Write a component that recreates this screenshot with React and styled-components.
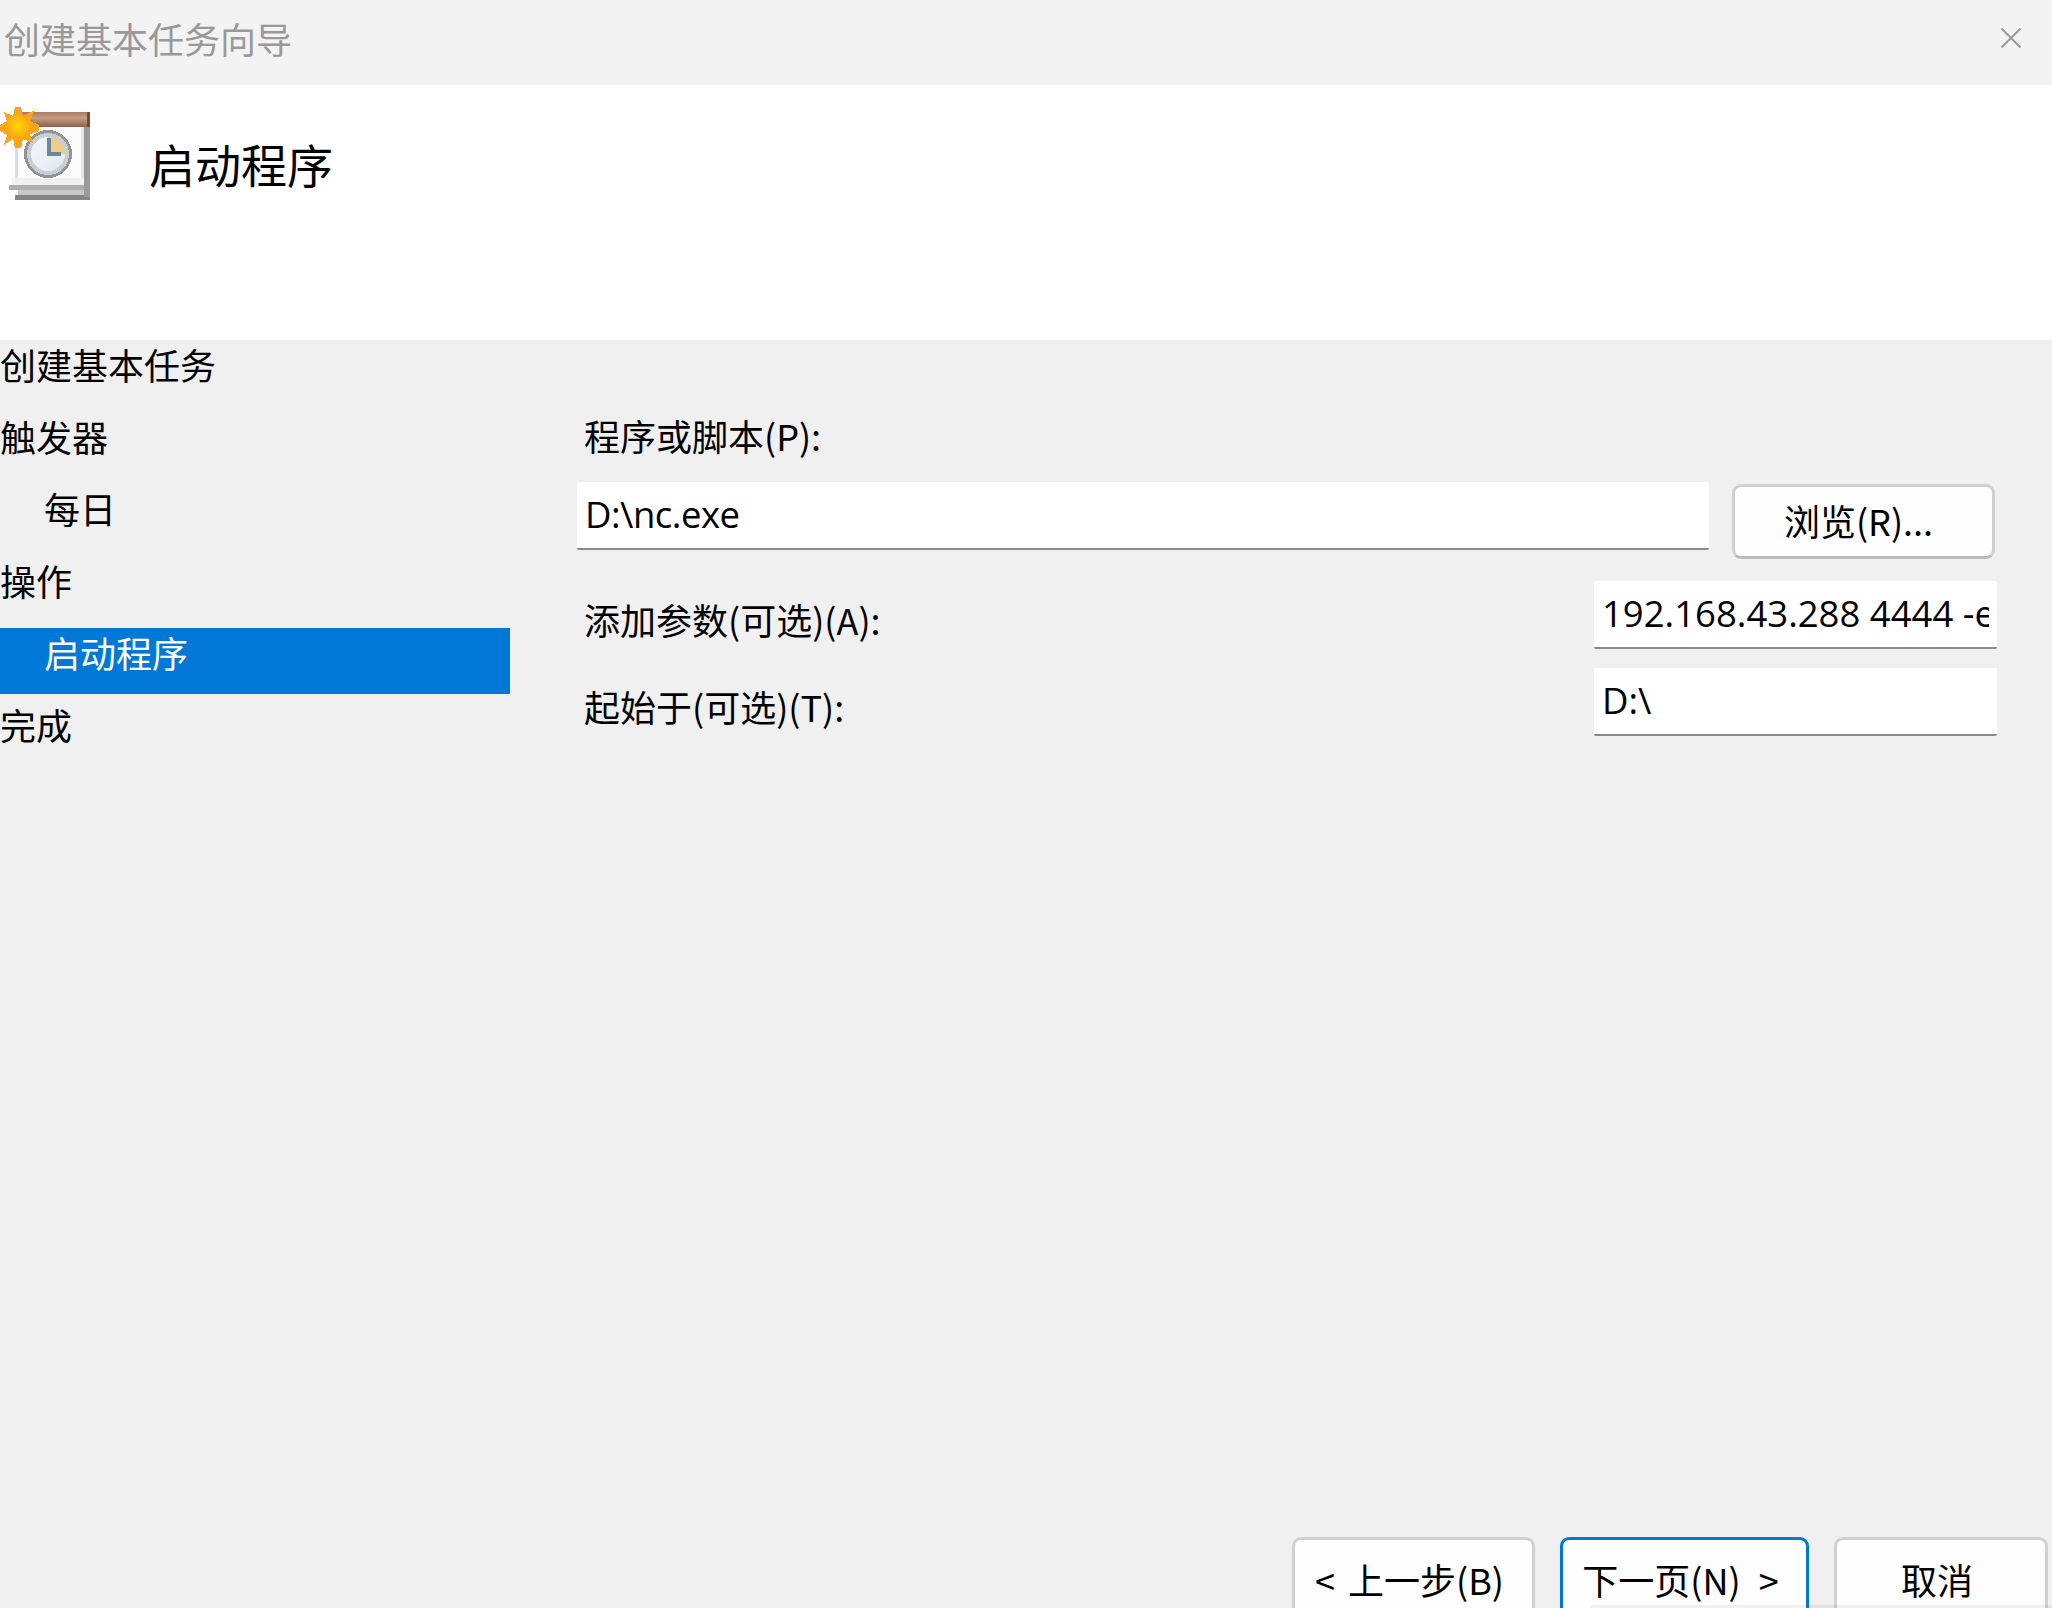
import styled, { createGlobalStyle } from "styled-components";

const GlobalStyle = createGlobalStyle`
  html, body {
    margin: 0;
    padding: 0;
    background: #f0f0f0;
  }
  body {
    font-family: "Noto Sans CJK SC", "Noto Sans", sans-serif;
    color: #000;
  }
`;

const navItems = [
  { label: "创建基本任务" },
  { label: "触发器" },
  { label: "每日", child: true },
  { label: "操作" },
  { label: "启动程序", child: true, active: true },
  { label: "完成" },
];

function TaskIcon() {
  return (
    <svg width="92" height="100" viewBox="0 0 92 100" shapeRendering="crispEdges">
      <defs>
        <linearGradient id="bar" x1="0" y1="0" x2="0" y2="1">
          <stop offset="0" stopColor="#a97c62" />
          <stop offset="0.4" stopColor="#c59c84" />
          <stop offset="1" stopColor="#8f5f48" />
        </linearGradient>
        <radialGradient id="sun" cx="0.55" cy="0.45" r="0.55">
          <stop offset="0" stopColor="#ffd800" />
          <stop offset="0.6" stopColor="#fdb90e" />
          <stop offset="1" stopColor="#fba512" />
        </radialGradient>
        <linearGradient id="face" x1="0" y1="0" x2="1" y2="1">
          <stop offset="0" stopColor="#f4f7fb" />
          <stop offset="1" stopColor="#dfe8f2" />
        </linearGradient>
      </defs>
      <rect x="15" y="95" width="75" height="5" fill="#858585" />
      <rect x="84" y="27" width="6" height="70" fill="#9a9a9a" />
      <rect x="18" y="90" width="66" height="5" fill="#c8c8c8" />
      <rect x="15" y="27" width="69" height="58" fill="#fcfcfc" />
      <rect x="15" y="27" width="3" height="52" fill="#dcdcdc" />
      <rect x="81" y="27" width="3" height="54" fill="#e6e6e6" />
      <rect x="12" y="78" width="72" height="7" fill="#f0f0f0" />
      <rect x="9" y="85" width="75" height="5" fill="#aeaeae" />
      <rect x="21" y="12" width="69" height="15" fill="url(#bar)" />
      <rect x="87" y="12" width="3" height="15" fill="#764a36" />
      <circle cx="48" cy="54" r="24" fill="#949494" />
      <circle cx="48" cy="54" r="21" fill="#c9ced3" />
      <circle cx="48" cy="54" r="17" fill="url(#face)" />
      <path d="M48 37 A17 17 0 0 1 65 54 L48 54 Z" fill="#ebcd87" />
      <rect x="47" y="38" width="4" height="18" fill="#6b8799" />
      <rect x="47" y="52" width="14" height="4" fill="#6b8799" />
      <polygon
        points="15,7 21,7 23,16 35,10 30,21 39,25 39,31 30,34 33,43 23,39 21,48 15,48 13,39 4,45 7,35 0,31 0,25 7,21 4,12 13,16"
        fill="#fba51a"
      />
      <circle cx="17" cy="27" r="12" fill="url(#sun)" />
    </svg>
  );
}

export default function App() {
  return (
    <>
      <GlobalStyle />
      <Window>
        <TitleBar>
          <WindowTitle>创建基本任务向导</WindowTitle>
          <CloseGlyph width="20" height="20" viewBox="0 0 20 20">
            <path d="M0.5 0.5 L19.5 19.5 M19.5 0.5 L0.5 19.5" stroke="#999" strokeWidth="2" fill="none" />
          </CloseGlyph>
        </TitleBar>
        <Header>
          <TaskIcon />
          <Heading>启动程序</Heading>
        </Header>
        <Main>
          <Nav>
            {navItems.map((item) => (
              <NavRow key={item.label} $child={item.child} $active={item.active}>
                {item.label}
              </NavRow>
            ))}
          </Nav>
          <Content>
            <FieldLabel>程序或脚本(P):</FieldLabel>
            <ProgramRow>
              <TextInput $width="1132px">
                <InputValue $tight>D:\nc.exe</InputValue>
              </TextInput>
              <BrowseButton>浏览(R)...</BrowseButton>
            </ProgramRow>
            <FieldRow>
              <FieldLabel $offset="12px">添加参数(可选)(A):</FieldLabel>
              <TextInput $width="403px">
                <InputValue>192.168.43.288 4444 -e</InputValue>
              </TextInput>
            </FieldRow>
            <FieldRow>
              <FieldLabel $offset="12px">起始于(可选)(T):</FieldLabel>
              <TextInput $width="403px">
                <InputValue>D:\</InputValue>
              </TextInput>
            </FieldRow>
          </Content>
        </Main>
        <Footer>
          <WizardButton $width="243px">
            <Chevron $side="left">&lt;</Chevron>上一步(B)
          </WizardButton>
          <WizardButton $width="249px" $primary>
            下一页(N)<Chevron $side="right">&gt;</Chevron>
          </WizardButton>
          <WizardButton $width="214px">取消</WizardButton>
          <FooterShadow />
        </Footer>
      </Window>
    </>
  );
}

const Window = styled.div`
  width: 2052px;
  height: 1608px;
  display: flex;
  flex-direction: column;
  overflow: hidden;
  background: #f0f0f0;
`;

const TitleBar = styled.div`
  height: 85px;
  flex: none;
  display: flex;
  align-items: center;
  justify-content: space-between;
  padding: 0 31px 10px 4px;
  box-sizing: border-box;
  background: #f3f3f3;
`;

const WindowTitle = styled.div`
  font-size: 36px;
  line-height: 52px;
  color: #999;
`;

const CloseGlyph = styled.svg`
  display: block;
`;

const Header = styled.div`
  height: 255px;
  flex: none;
  display: flex;
  align-items: flex-start;
  padding-top: 15px;
  box-sizing: border-box;
  background: #fff;
`;

const Heading = styled.h1`
  margin: 31px 0 0 57px;
  font-size: 46px;
  font-weight: 400;
  line-height: 64px;
`;

const Main = styled.div`
  flex: 1;
  min-height: 0;
  display: flex;
`;

const Nav = styled.nav`
  width: 510px;
  flex: none;
  display: flex;
  flex-direction: column;
  gap: 6px;
`;

const NavRow = styled.div`
  height: 66px;
  box-sizing: border-box;
  padding-left: ${(p) => (p.$child ? "44px" : "0")};
  font-size: 36px;
  line-height: 48px;
  color: ${(p) => (p.$active ? "#fff" : "#000")};
  background: ${(p) => (p.$active ? "#0078d7" : "transparent")};
`;

const Content = styled.div`
  flex: 1;
  min-width: 0;
  padding: 69px 55px 0 67px;
`;

const FieldLabel = styled.div`
  padding-left: 7px;
  margin-top: ${(p) => p.$offset || 0};
  font-size: 36px;
  line-height: 52px;
`;

const ProgramRow = styled.div`
  display: flex;
  align-items: flex-start;
  gap: 23px;
  margin-top: 21px;
`;

const FieldRow = styled.div`
  display: flex;
  justify-content: space-between;
  align-items: flex-start;
  margin-top: 19px;

  ${ProgramRow} + & {
    margin-top: 22px;
  }
`;

const TextInput = styled.div`
  width: ${(p) => p.$width};
  height: 68px;
  flex: none;
  box-sizing: border-box;
  padding: 0 8px;
  background: #fff;
  border-bottom: 2px solid #8a8a8a;
  border-radius: 2px;
`;

const InputValue = styled.div`
  overflow: hidden;
  white-space: nowrap;
  font-family: "Open Sans", "Noto Sans", sans-serif;
  font-size: 36.5px;
  line-height: 64px;
  letter-spacing: ${(p) => (p.$tight ? "-0.5px" : "0")};
`;

const BrowseButton = styled.div`
  width: 263px;
  height: 75px;
  flex: none;
  margin-top: 2px;
  padding-right: 10px;
  box-sizing: border-box;
  font-size: 36px;
  line-height: 66px;
  text-align: center;
  background: #fdfdfd;
  border: 3px solid #d0d0d0;
  border-bottom-color: #bbb;
  border-radius: 9px;
`;

const Footer = styled.div`
  position: relative;
  height: 71px;
  flex: none;
  display: flex;
  justify-content: flex-end;
  gap: 25px;
  padding-right: 4px;
  overflow: hidden;
`;

const WizardButton = styled.div`
  width: ${(p) => p.$width};
  height: 83px;
  flex: none;
  box-sizing: border-box;
  display: flex;
  align-items: center;
  justify-content: center;
  padding-right: 8px;
  font-size: 36px;
  line-height: 72px;
  background: #fdfdfd;
  border: 3px solid ${(p) => (p.$primary ? "#0078d7" : "#d0d0d0")};
  border-radius: 9px;
`;

const Chevron = styled.span`
  margin: ${(p) => (p.$side === "left" ? "0 13px 0 0" : "0 0 0 18px")};
`;

/* faint edge of a window lying under the bottom of the shot */
const FooterShadow = styled.div`
  position: absolute;
  right: 0;
  bottom: 0;
  width: 462px;
  height: 3px;
  background: rgba(0, 0, 0, 0.05);
  border-top-left-radius: 3px;
`;
